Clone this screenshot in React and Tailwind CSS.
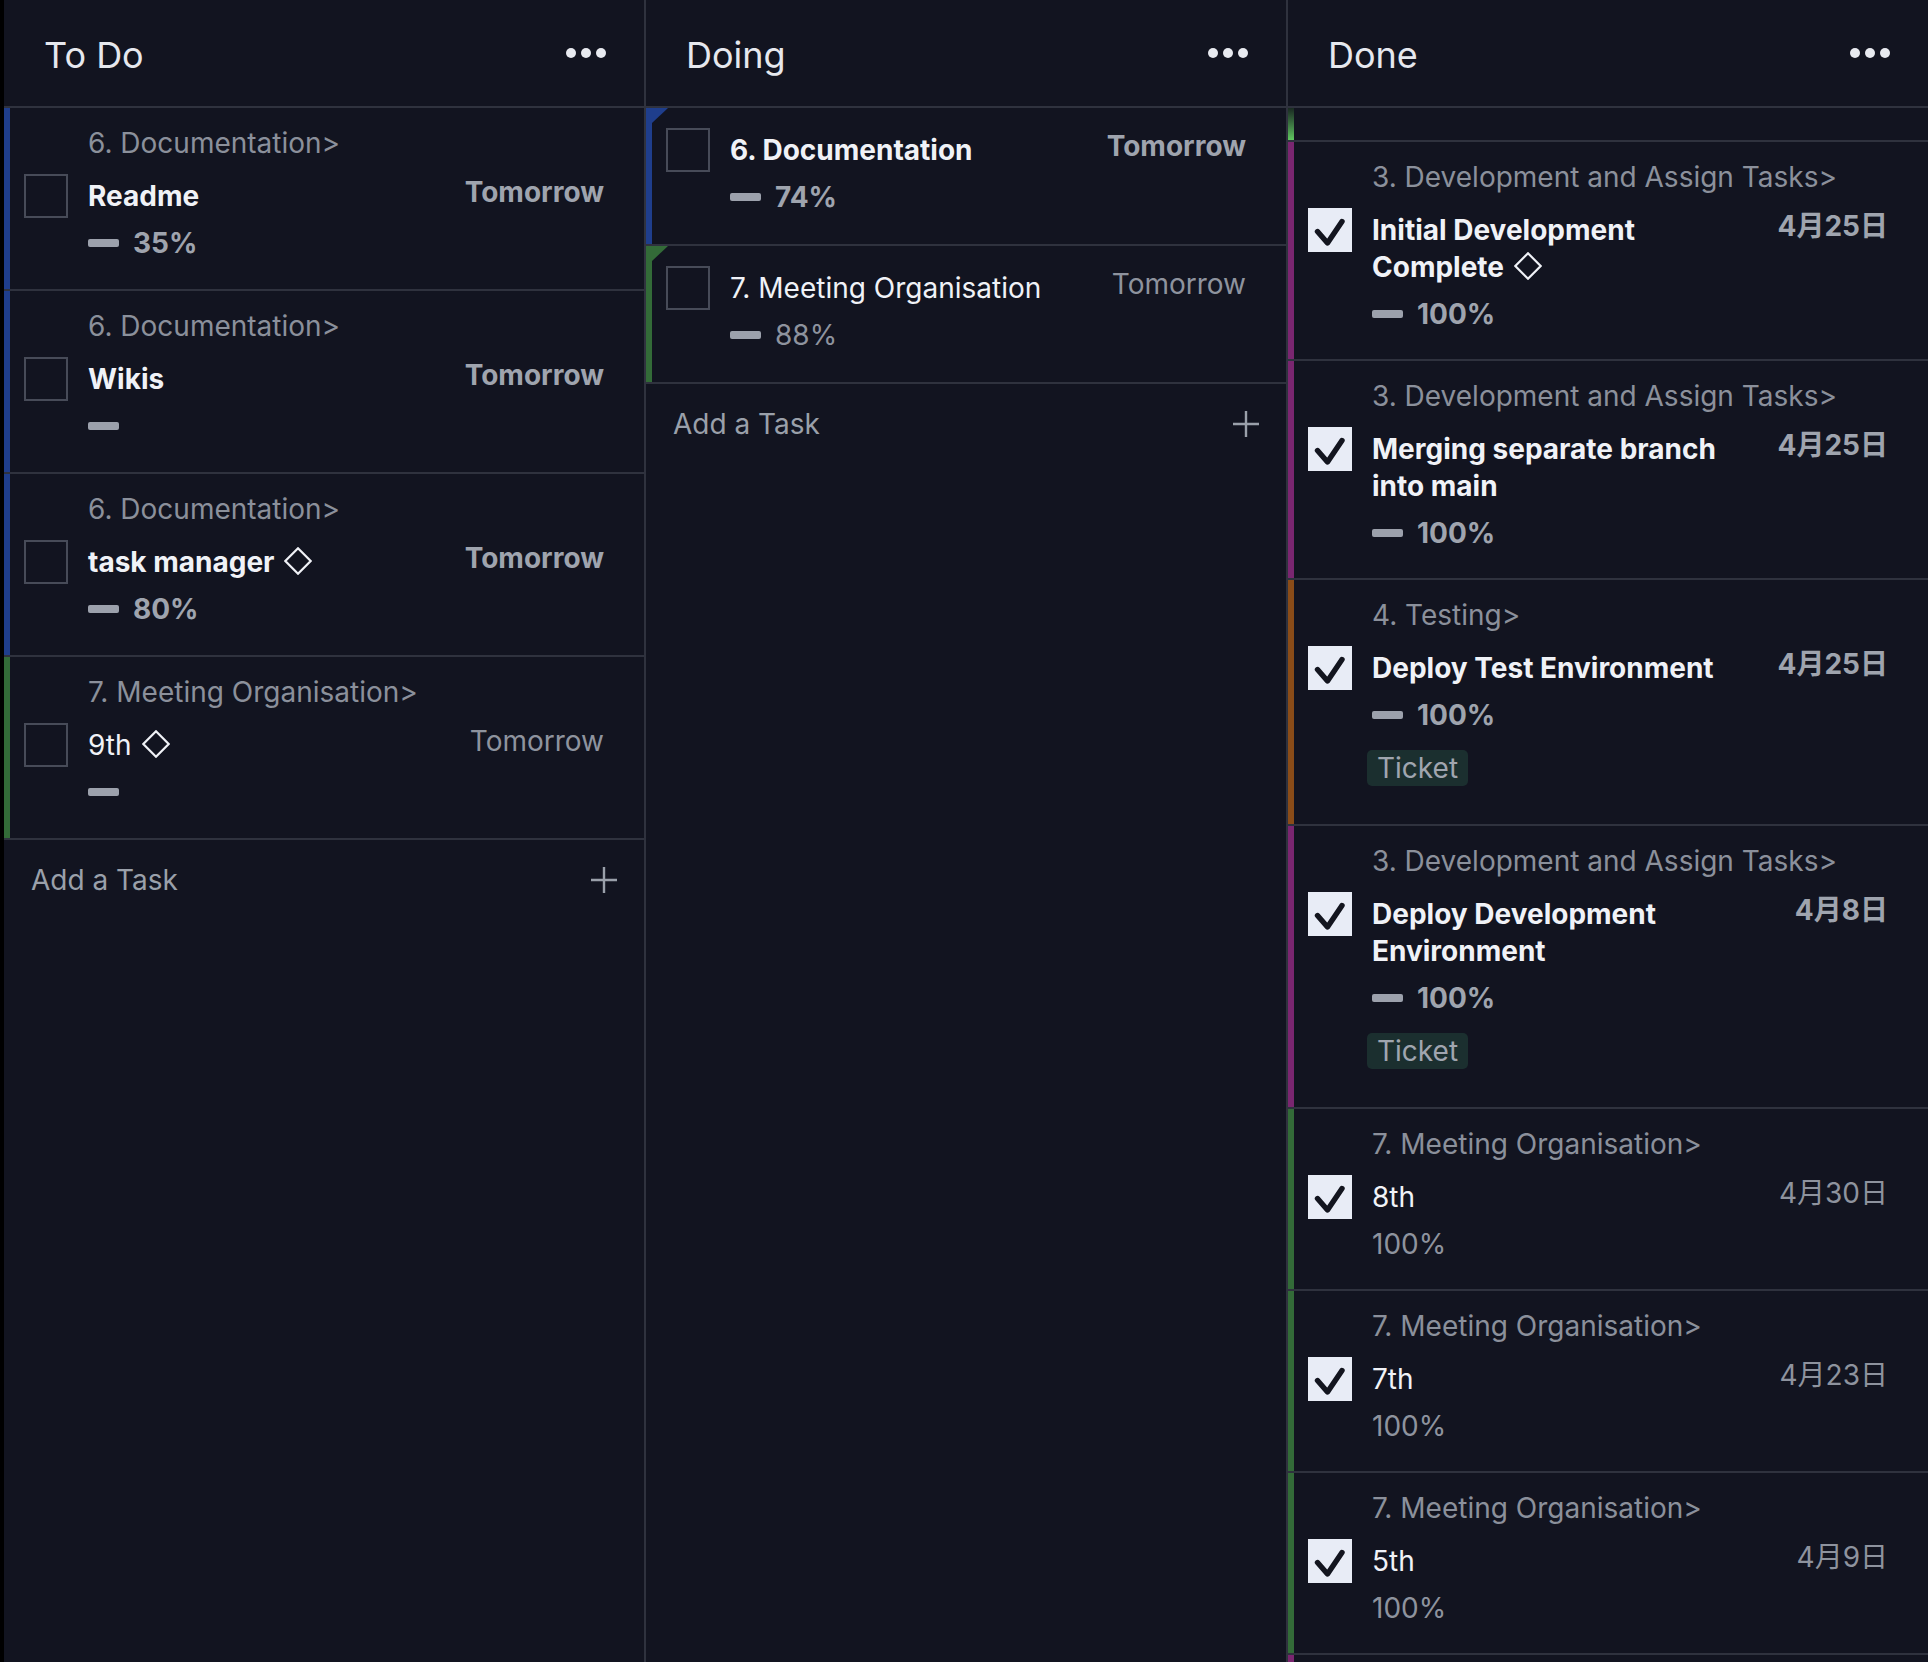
import React from "react";

const STRIP = {
  blue: "bg-[#1f3e8c]",
  green: "bg-[#336b38]",
  purple: "bg-[#7a2670]",
  orange: "bg-[#8a4c18]",
};
const CORNER = { blue: "#1f3e8c", green: "#336b38" };

function Dots() {
  return (
    <svg width="40" height="10" viewBox="0 0 40 10" className="fill-[#e8eaf0]">
      <circle cx="5" cy="5" r="5" />
      <circle cx="20" cy="5" r="5" />
      <circle cx="35" cy="5" r="5" />
    </svg>
  );
}

function Diamond() {
  return (
    <svg
      width="28"
      height="28"
      viewBox="0 0 28 28"
      className="inline-block ml-[10px] align-[-3px]"
    >
      <path d="M14 1.3 L26.7 14 L14 26.7 L1.3 14 Z" fill="none" stroke="#f0f2f7" strokeWidth="2.2" />
    </svg>
  );
}

function Plus() {
  return (
    <svg width="28" height="28" viewBox="0 0 28 28">
      <path d="M14 1 V27 M1 14 H27" stroke="#9aa0aa" strokeWidth="2.4" />
    </svg>
  );
}

function Checkbox({ checked }) {
  if (checked) {
    return (
      <div className="w-[44px] h-[44px] shrink-0 bg-[#e8ecf6]">
        <svg width="44" height="44" viewBox="0 0 44 44">
          <path
            d="M9.5 23.5 L19.5 35 L34 13.5"
            fill="none"
            stroke="#13151f"
            strokeWidth="5.4"
            strokeLinecap="round"
            strokeLinejoin="round"
          />
        </svg>
      </div>
    );
  }
  return <div className="w-[44px] h-[44px] shrink-0 border-2 border-[#474b58]" />;
}

function Card({ t, checked, pb }) {
  return (
    <div className="relative flex border-b-2 border-[#2f323e]">
      <div className={`w-[6px] shrink-0 ${STRIP[t.strip]}`} />
      {t.corner && (
        <svg width="22" height="15" viewBox="0 0 22 15" className="absolute left-0 top-0">
          <polygon points="0,0 22,0 6,15 0,15" fill={CORNER[t.strip]} />
        </svg>
      )}
      <div className={`flex-1 min-w-0 pt-[20px] pl-[14px] pr-[40px] ${pb}`}>
        {t.cat && (
          <div className="h-[30px] leading-[30px] pl-[64px] mb-[16px] text-[#8b909b] whitespace-nowrap">
            {t.cat}
          </div>
        )}
        <div className="flex items-start">
          <Checkbox checked={checked} />
          <div className="flex-1 min-w-0 ml-[20px]">
            <div className="flex items-start">
              <div
                className={`flex-1 min-w-0 py-[4px] leading-[37px] text-[#f0f2f7] ${
                  t.bold ? "font-bold" : ""
                }`}
              >
                {t.title}
                {t.diamond && <Diamond />}
              </div>
              <div
                className={`shrink-0 ml-[30px] leading-[37px] whitespace-nowrap ${
                  t.bold ? "font-bold text-[#9fa4ae]" : "text-[#8e939e]"
                }`}
              >
                {t.date}
              </div>
            </div>
            <div className="mt-[3px] h-[42px] flex items-center gap-[14px]">
              {t.dash && <div className="w-[31px] h-[8px] rounded-[2px] bg-[#9ca1ac]" />}
              {t.pct && (
                <span className={t.bold ? "font-bold text-[#9fa4ae]" : "text-[#8e939e]"}>
                  {t.pct}
                </span>
              )}
            </div>
            {t.tag && (
              <div className="mt-[14px] mb-[14px] ml-[-5px] flex">
                <span className="h-[36px] leading-[36px] px-[10px] rounded-[5px] bg-[#1b2f2f] text-[#a0a5af]">
                  {t.tag}
                </span>
              </div>
            )}
          </div>
        </div>
      </div>
    </div>
  );
}

function Header({ title }) {
  return (
    <div className="h-[108px] shrink-0 border-b-2 border-[#2f323e] flex items-center justify-between pl-[40px] pr-[38px]">
      <span className="mt-[4px] text-[36px] text-[#e6e8ee]">{title}</span>
      <Dots />
    </div>
  );
}

function AddTask() {
  return (
    <div className="flex items-center justify-between pl-[27px] pr-[26px] py-[19px]">
      <span className="leading-[42px] text-[#9aa0aa]">Add a Task</span>
      <Plus />
    </div>
  );
}

const todo = [
  { cat: "6. Documentation>", title: "Readme", bold: true, date: "Tomorrow", dash: true, pct: "35%", strip: "blue" },
  { cat: "6. Documentation>", title: "Wikis", bold: true, date: "Tomorrow", dash: true, strip: "blue" },
  { cat: "6. Documentation>", title: "task manager", diamond: true, bold: true, date: "Tomorrow", dash: true, pct: "80%", strip: "blue" },
  { cat: "7. Meeting Organisation>", title: "9th", diamond: true, date: "Tomorrow", dash: true, strip: "green" },
];

const doing = [
  { title: "6. Documentation", bold: true, date: "Tomorrow", dash: true, pct: "74%", strip: "blue", corner: true },
  { title: "7. Meeting Organisation", date: "Tomorrow", dash: true, pct: "88%", strip: "green", corner: true },
];

const done = [
  { cat: "3. Development and Assign Tasks>", title: "Initial Development Complete", diamond: true, bold: true, date: "4月25日", dash: true, pct: "100%", strip: "purple" },
  { cat: "3. Development and Assign Tasks>", title: "Merging separate branch into main", bold: true, date: "4月25日", dash: true, pct: "100%", strip: "purple" },
  { cat: "4. Testing>", title: "Deploy Test Environment", bold: true, date: "4月25日", dash: true, pct: "100%", tag: "Ticket", strip: "orange" },
  { cat: "3. Development and Assign Tasks>", title: "Deploy Development Environment", bold: true, date: "4月8日", dash: true, pct: "100%", tag: "Ticket", strip: "purple" },
  { cat: "7. Meeting Organisation>", title: "8th", date: "4月30日", pct: "100%", strip: "green" },
  { cat: "7. Meeting Organisation>", title: "7th", date: "4月23日", pct: "100%", strip: "green" },
  { cat: "7. Meeting Organisation>", title: "5th", date: "4月9日", pct: "100%", strip: "green" },
];

export default function App() {
  return (
    <div className="w-[1928px] h-[1662px] overflow-hidden flex bg-black pl-[4px] text-[28px] font-['Inter','Noto_Sans_CJK_JP',sans-serif]">
      <div className="w-[640px] shrink-0 bg-[#121420] flex flex-col">
        <Header title="To Do" />
        {todo.map((t, i) => (
          <Card key={i} t={t} pb="pb-[25px]" />
        ))}
        <AddTask />
      </div>
      <div className="w-[642px] shrink-0 bg-[#121420] border-l-2 border-[#2f323e] flex flex-col">
        <Header title="Doing" />
        {doing.map((t, i) => (
          <Card key={i} t={t} pb="pb-[26px]" />
        ))}
        <AddTask />
      </div>
      <div className="w-[642px] shrink-0 bg-[#121420] border-l-2 border-[#2f323e] flex flex-col">
        <Header title="Done" />
        <div className="h-[34px] shrink-0 flex border-b-2 border-[#2f323e]">
          <div className="w-[6px] bg-linear-to-b from-[#1a2a22] to-[#5fc85f]" />
        </div>
        {done.map((t, i) => (
          <Card key={i} t={t} checked pb="pb-[24px]" />
        ))}
        <div className="h-[120px] shrink-0 flex">
          <div className={`w-[6px] ${STRIP.purple}`} />
        </div>
      </div>
    </div>
  );
}
